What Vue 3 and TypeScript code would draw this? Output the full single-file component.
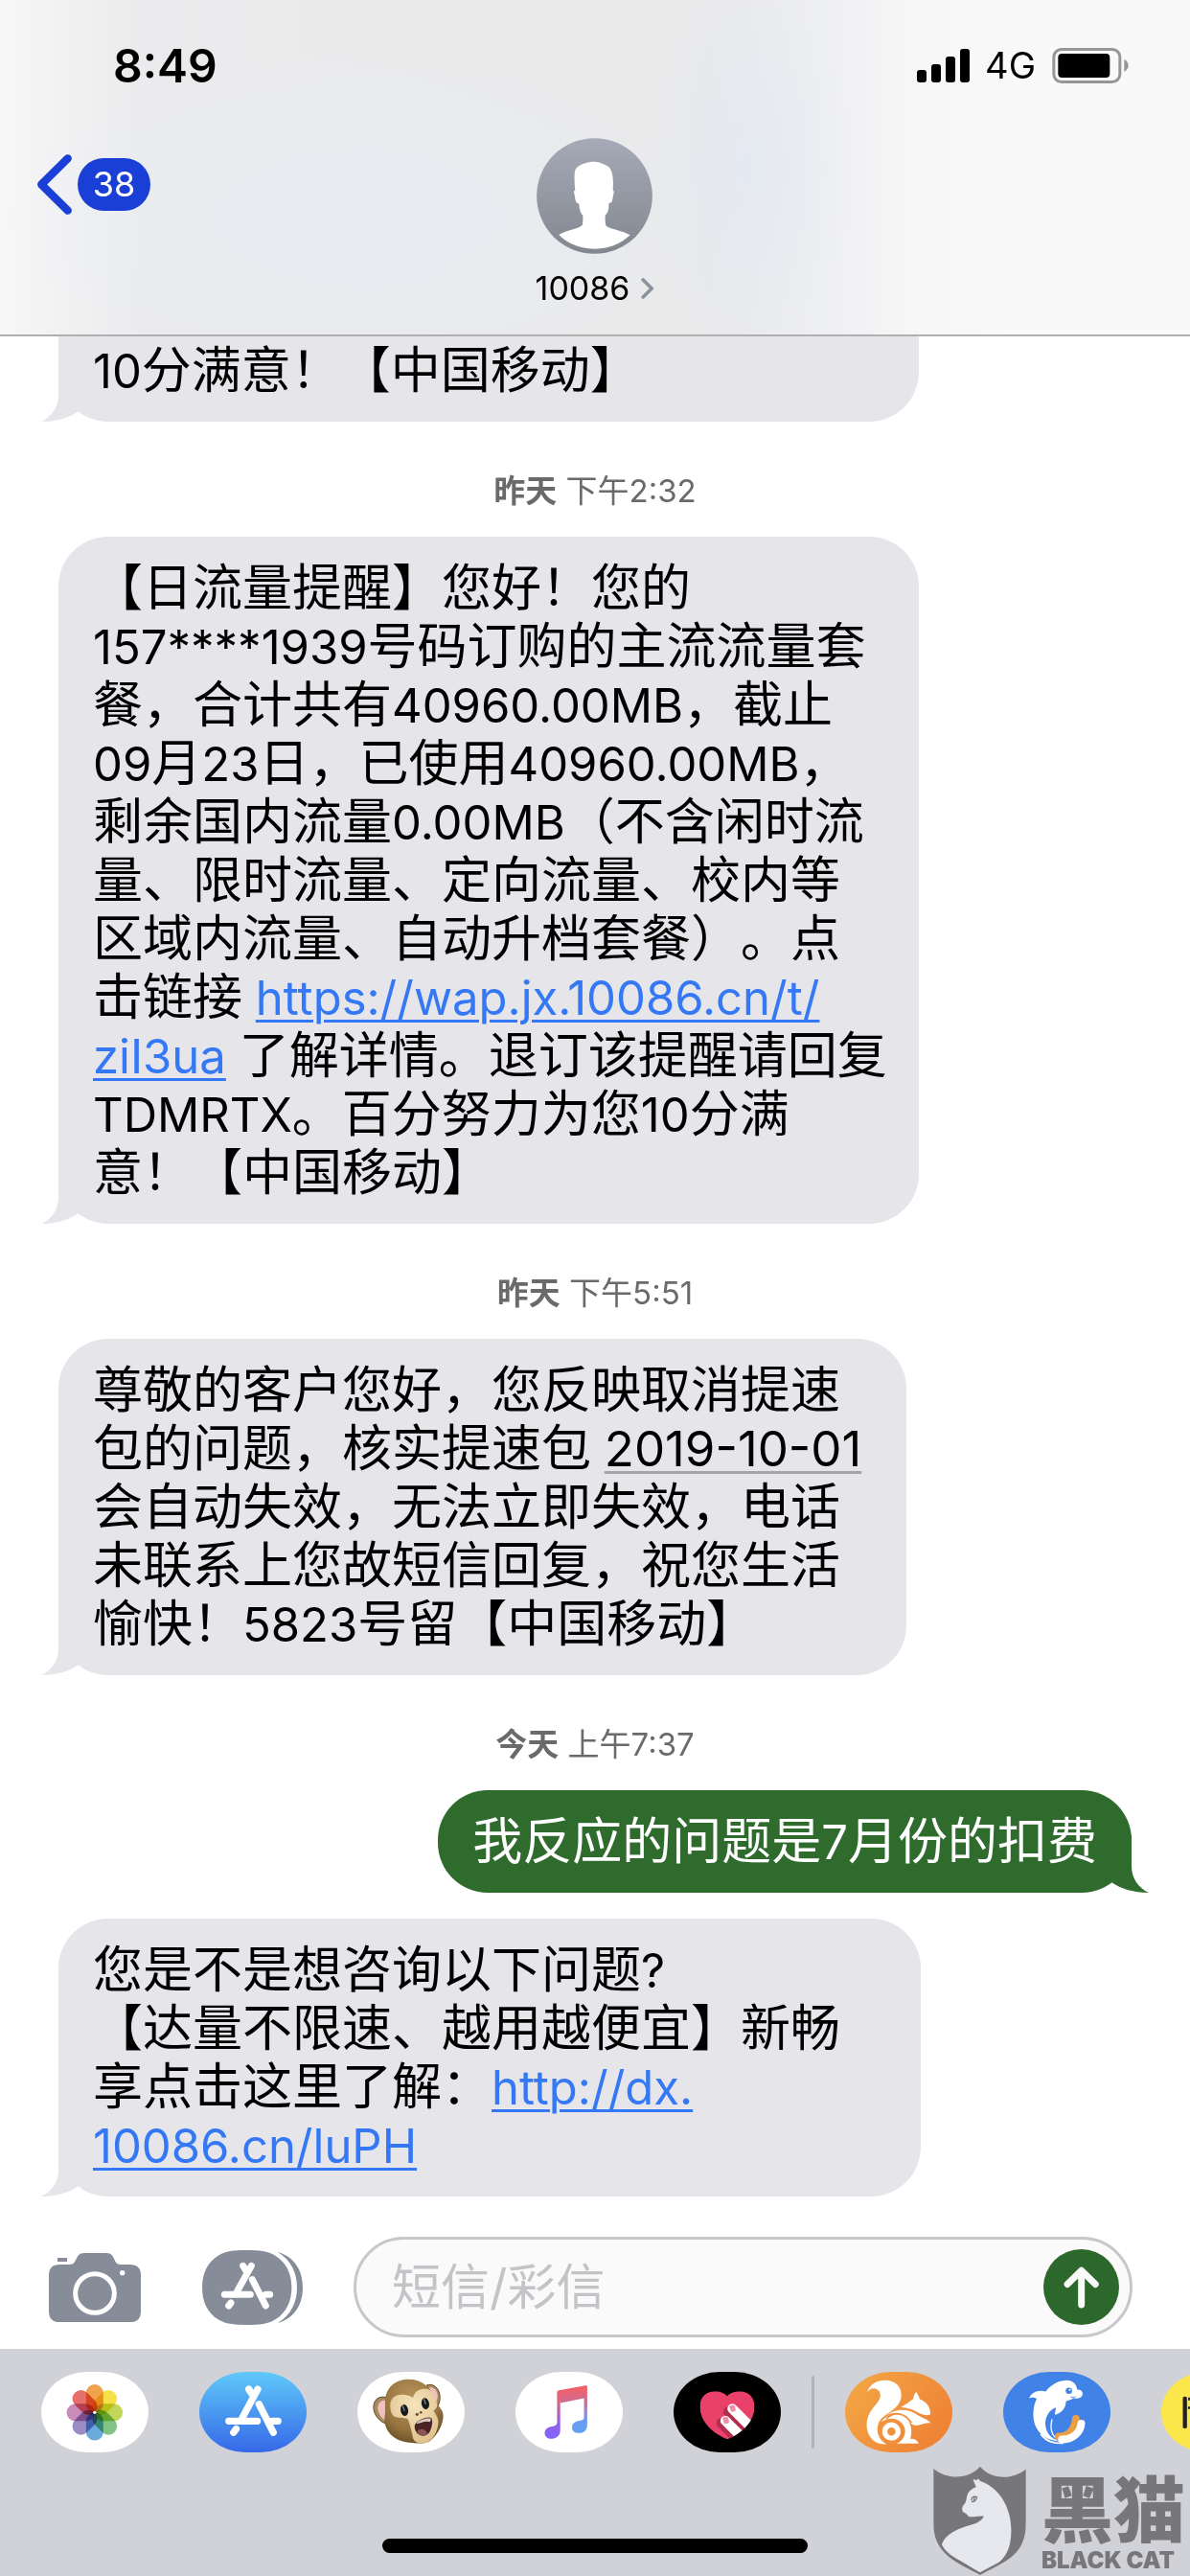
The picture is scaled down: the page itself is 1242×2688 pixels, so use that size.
<script setup lang="ts">
import { ref } from 'vue'

interface Segment {
  text: string
  kind?: 'link' | 'date'
}

interface Message {
  id: number
  sent?: boolean
  clipped?: boolean
  day?: string
  time?: string
  width?: number
  lines: Segment[][]
}

const draft = ref('')

// Latin runs are set slightly smaller than the Chinese text around them.
const runs = (text: string): string[] => text.match(/[\x20-\x7e]+|[^\x20-\x7e]+/g) ?? []
const isLatin = (text: string): boolean => /^[\x20-\x7e]/.test(text)

const messages: Message[] = [
  { id: 1, clipped: true, width: 80.2, lines: [[{ text: '10分满意！【中国移动】' }]] },
  {
    id: 2,
    day: '昨天',
    time: '下午2:32',
    width: 80.2,
    lines: [
      [{ text: '【日流量提醒】您好！您的' }],
      [{ text: '157****1939号码订购的主流流量套' }],
      [{ text: '餐，合计共有40960.00MB，截止' }],
      [{ text: '09月23日，已使用40960.00MB，' }],
      [{ text: '剩余国内流量0.00MB（不含闲时流' }],
      [{ text: '量、限时流量、定向流量、校内等' }],
      [{ text: '区域内流量、自动升档套餐）。点' }],
      [{ text: '击链接 ' }, { text: 'https://wap.jx.10086.cn/t/', kind: 'link' }],
      [{ text: 'ziI3ua', kind: 'link' }, { text: ' 了解详情。退订该提醒请回复' }],
      [{ text: 'TDMRTX。百分努力为您10分满' }],
      [{ text: '意！【中国移动】' }],
    ],
  },
  {
    id: 3,
    day: '昨天',
    time: '下午5:51',
    width: 79,
    lines: [
      [{ text: '尊敬的客户您好，您反映取消提速' }],
      [{ text: '包的问题，核实提速包 ' }, { text: '2019-10-01', kind: 'date' }],
      [{ text: '会自动失效，无法立即失效，电话' }],
      [{ text: '未联系上您故短信回复，祝您生活' }],
      [{ text: '愉快！5823号留【中国移动】' }],
    ],
  },
  { id: 4, sent: true, day: '今天', time: '上午7:37', lines: [[{ text: '我反应的问题是7月份的扣费' }]] },
  {
    id: 5,
    width: 80.4,
    lines: [
      [{ text: '您是不是想咨询以下问题?' }],
      [{ text: '【达量不限速、越用越便宜】新畅' }],
      [{ text: '享点击这里了解：' }, { text: 'http://dx.', kind: 'link' }],
      [{ text: '10086.cn/luPH', kind: 'link' }],
    ],
  },
]

const petals = ['#f0a24c', '#f6e146', '#c2d659', '#80c385', '#6aabdc', '#9b8cc5', '#c98cb9', '#e46f6b']
</script>

<template>
  <div class="phone">
    <header class="top">
      <div class="status">
        <span class="clock">8:49</span>
        <div class="indicators">
          <svg class="signal" viewBox="54 60 165 105" aria-hidden="true">
            <rect x="54" y="126" width="30" height="39" rx="9" />
            <rect x="99" y="108" width="30" height="57" rx="9" />
            <rect x="144" y="84" width="30" height="81" rx="9" />
            <rect x="189" y="60" width="30" height="105" rx="9" />
          </svg>
          <span class="network">4G</span>
          <svg class="battery" viewBox="474 57 238 111" aria-hidden="true">
            <rect x="478.500" y="61.500" width="207" height="102" rx="24" fill="none" stroke="#969696" stroke-width="9" />
            <rect x="492" y="75" width="162" height="75" rx="12" />
            <path d="M699 93Q712 100 712 112T699 132Z" fill="#969696" />
          </svg>
        </div>
      </div>
      <nav class="nav">
        <button class="back" type="button" aria-label="返回">
          <svg viewBox="115 392 110 190" aria-hidden="true">
            <path d="M213 405L130 487L213 569" fill="none" stroke="#193fd6" stroke-width="25" stroke-linecap="round" stroke-linejoin="round" />
          </svg>
          <span class="unread">38</span>
        </button>
        <button class="contact" type="button">
          <svg class="avatar" viewBox="120 42 363 363" aria-hidden="true">
            <defs>
              <linearGradient id="avatarFill" x1="0" y1="0" x2="0" y2="1">
                <stop offset="0" stop-color="#a6aab8" />
                <stop offset="1" stop-color="#82878f" />
              </linearGradient>
            </defs>
            <circle cx="301.500" cy="223.500" r="181" fill="url(#avatarFill)" />
            <path d="M190 345C215 330 253 326 263 315C266 305 265 295 265 284C258 278 254 266 253 248Q243 248 241 232L237 210Q237 206 241 206C238 180 237 148 243 138C252 124 282 116 301 116C318 116 336 126 346 132C360 146 361 176 359 206Q363 206 362 212L357 238Q355 246 346 246C347 264 344 278 335 284C335 296 334 308 338 317C350 328 390 331 413 346C383 374 345 389 302 389C259 389 219 374 190 345Z" fill="#fff" />
          </svg>
          <span class="name">
            10086
            <svg class="more" viewBox="440 484 42 68" aria-hidden="true">
              <path d="M446 490L474 518L446 546" fill="none" stroke="#8b929c" stroke-width="11" stroke-linecap="round" stroke-linejoin="round" />
            </svg>
          </span>
        </button>
      </nav>
    </header>

    <main class="thread">
      <template v-for="m in messages" :key="m.id">
        <p v-if="m.day" class="stamp"><b>{{ m.day }}</b> {{ m.time }}</p>
        <article
          class="bubble"
          :class="{ sent: m.sent, clipped: m.clipped, follow: !m.day && !m.clipped }"
          :style="m.width ? { width: m.width + '%' } : undefined"
        >
          <svg class="tail" viewBox="0 0 60 60" aria-hidden="true">
            <path d="M18 0V32C18 45 11 55 0 60C16 60 29 56 39 49L60 30V0Z" />
          </svg>
          <p v-for="(line, i) in m.lines" :key="i" class="line">
            <template v-for="(s, j) in line" :key="j">
              <a v-if="s.kind" href="#" :class="s.kind">{{ s.text }}</a>
              <template v-else>
                <span v-for="(r, k) in runs(s.text)" :key="k" :class="{ latin: isLatin(r) }">{{ r }}</span>
              </template>
            </template>
          </p>
        </article>
      </template>
    </main>

    <form class="composer" @submit.prevent>
      <button class="tool camera" type="button" aria-label="相机">
        <svg viewBox="153 147 288 216" aria-hidden="true">
          <path d="M180 162h30v12h-30zM187 183H218C245 183 232 147 264 147H333C364 147 352 183 378 183H407Q441 183 441 217V329Q441 363 407 363H187Q153 363 153 329V217Q153 183 187 183Z" fill="#868d99" />
          <circle cx="297" cy="273" r="61" fill="none" stroke="#fff" stroke-width="15" />
          <circle cx="383" cy="209" r="8" fill="#fff" />
        </svg>
      </button>
      <button class="tool store" type="button" aria-label="应用">
        <svg viewBox="633 138 315 234" aria-hidden="true">
          <path d="M773 138C812 138 838 140 862 155C897 177 913 212 913 255S897 333 862 355C838 370 812 372 773 372S708 370 683 355C648 333 633 298 633 255S648 177 683 155C708 140 734 138 773 138Z" fill="#868d99" />
          <path d="M870 144C925 160 948 205 948 255S925 350 870 366C912 340 930 300 930 255S912 170 870 144Z" fill="#868d99" />
          <g stroke="#fff" stroke-width="21" stroke-linecap="round" fill="none">
            <path d="M761 187L773 206M787 187L743 266M703 277H784M790 230L832 312M832 277H845M723 303L716 312" />
          </g>
        </svg>
      </button>
      <div class="field">
        <input v-model="draft" type="text" placeholder="短信/彩信" aria-label="短信/彩信" />
        <button class="send" type="submit" aria-label="发送">
          <svg viewBox="807 105 237 238" aria-hidden="true">
            <path d="M926 280V174M882 215L926 172L970 215" fill="none" stroke="#fafafa" stroke-width="21" stroke-linecap="round" stroke-linejoin="round" />
          </svg>
        </button>
      </div>
    </form>

    <footer class="dock">
      <div class="apps">
        <button class="app white" type="button" aria-label="照片">
          <svg viewBox="129 525 337 252" aria-hidden="true">
            <g class="flower">
              <rect v-for="(c, i) in petals" :key="c" x="270" y="564" width="54" height="88" rx="27" :fill="c" :transform="`rotate(${i * 45} 297 652)`" />
            </g>
            <circle cx="297" cy="652" r="5" fill="#fff" />
          </svg>
        </button>
        <button class="app blue" type="button" aria-label="App Store">
          <svg viewBox="623 525 338 252" aria-hidden="true">
            <path d="M779 579L793 600M807 579L759 668M716 679H806M811 626L856 715M851 679H871M739 704L731 715" fill="none" stroke="#fff" stroke-width="22" stroke-linecap="round" />
          </svg>
        </button>
        <button class="app white" type="button" aria-label="拟我表情">
          <svg viewBox="98 105 338 252" aria-hidden="true">
            <defs>
              <radialGradient id="fur" cx="0.45" cy="0.3" r="0.75">
                <stop offset="0" stop-color="#b8935a" />
                <stop offset="0.65" stop-color="#96743f" />
                <stop offset="1" stop-color="#644922" />
              </radialGradient>
              <radialGradient id="skin" cx="0.5" cy="0.3" r="0.8">
                <stop offset="0" stop-color="#f6e4bd" />
                <stop offset="1" stop-color="#dcbd86" />
              </radialGradient>
            </defs>
            <path d="M187 184C158 178 145 202 150 225C155 247 172 261 186 267Z" fill="#a98a5e" stroke="#5f4726" stroke-width="3" />
            <path d="M186 194C166 192 159 211 164 228C168 243 177 252 185 257Z" fill="#f1bfc2" />
            <path d="M315 147C338 137 358 158 358 184C358 198 354 209 350 214Z" fill="#a98a5e" stroke="#5f4726" stroke-width="3" />
            <path d="M324 154C341 149 352 168 351 184L347 198Z" fill="#f1bfc2" />
            <path d="M186 211C181 165 207 131 254 128C300 126 327 151 339 187C348 209 372 224 368 248C366 273 350 304 326 322C309 333 276 328 250 325C207 318 181 286 184 248C185 234 188 224 186 211Z" fill="url(#fur)" />
            <path d="M204 229C196 199 206 179 233 176C253 175 267 181 273 186C278 168 290 157 313 157C333 159 343 179 349 206C351 217 344 222 338 226C342 236 354 249 353 264C351 294 334 322 312 328C293 332 278 327 273 313C269 292 264 269 257 253C240 244 211 259 204 229Z" fill="url(#skin)" />
            <ellipse cx="246" cy="225" rx="12" ry="18" transform="rotate(-10 246 225)" fill="#151b1d" />
            <ellipse cx="312" cy="204" rx="12" ry="18" transform="rotate(-10 312 204)" fill="#151b1d" />
            <path d="M241 212L246 226M308 191L313 205" stroke="#7d8789" stroke-width="4" stroke-linecap="round" />
            <circle cx="286" cy="238" r="5" fill="#6b4d35" />
            <circle cx="298" cy="232" r="4" fill="#6b4d35" />
            <path d="M278 276C279 258 322 242 331 250C338 261 331 292 320 300C305 312 280 304 278 276Z" fill="#4c2427" />
            <path d="M286 292C296 279 314 285 319 300C308 309 292 306 286 292Z" fill="#8e5558" />
            <path d="M283 268C289 257 319 247 330 252L327 262C312 256 295 267 283 268Z" fill="#d8cfc0" />
          </svg>
        </button>
        <button class="app white" type="button" aria-label="音乐">
          <svg viewBox="593 105 338 252" aria-hidden="true">
            <defs>
              <linearGradient id="note" gradientUnits="userSpaceOnUse" x1="755" y1="160" x2="765" y2="310">
                <stop offset="0" stop-color="#ef6169" />
                <stop offset="0.25" stop-color="#cf6a92" />
                <stop offset="0.65" stop-color="#6f9af0" />
                <stop offset="1" stop-color="#5aa5f8" />
              </linearGradient>
              <linearGradient id="noteLeft" gradientUnits="userSpaceOnUse" x1="730" y1="160" x2="720" y2="310">
                <stop offset="0" stop-color="#ef6169" />
                <stop offset="0.25" stop-color="#dd6484" />
                <stop offset="0.7" stop-color="#9461e8" />
                <stop offset="1" stop-color="#8262fb" />
              </linearGradient>
            </defs>
            <path d="M724 168Q724 163 730 162L813 147Q819 146 819 152V270C819 288 808 297 793 297C779 297 771 290 771 280C771 266 781 260 795 258C805 257 809 254 809 246V187L734 202V200Z" fill="url(#note)" />
            <path d="M724 168L734 164V288C734 305 722 315 706 315C693 315 685 307 685 298C685 285 694 278 708 276C720 274 724 272 724 262Z" fill="url(#noteLeft)" />
          </svg>
        </button>
        <button class="app black" type="button" aria-label="Digital Touch">
          <svg viewBox="1088 105 338 252" aria-hidden="true">
            <defs>
              <clipPath id="heartClip">
                <path d="M1257 181C1276 157 1343 155 1343 215C1343 262 1298 301 1257 316C1216 301 1171 262 1171 215C1171 155 1238 157 1257 181Z" />
              </clipPath>
            </defs>
            <g clip-path="url(#heartClip)">
              <path d="M1160 150h200v180h-200z" fill="#e94169" />
              <path d="M1262 230L1320 290M1240 265L1290 315" stroke="#b32d4d" stroke-width="34" stroke-linecap="round" />
              <path d="M1273 220L1340 287M1251 258L1310 317" stroke="#fff" stroke-width="31" stroke-linecap="round" />
              <path d="M1263 213Q1272 206 1281 211L1284 226Q1276 233 1269 228ZM1242 250Q1251 243 1260 248L1263 263Q1255 271 1247 265Z" fill="#f08ba8" />
            </g>
          </svg>
        </button>
        <span class="divider"></span>
        <button class="app orange" type="button" aria-label="UC">
          <svg viewBox="188 495 338 252" aria-hidden="true">
            <path d="M257 559C265 534 287 521 315 521C346 521 366 541 365 569C364 591 349 609 326 623C304 637 290 650 290 675C290 697 301 713 319 722C281 725 256 698 256 661C256 627 278 606 291 589C305 570 300 551 283 547C273 545 263 550 257 559Z" fill="#fff" />
            <path d="M364 606C382 595 395 586 403 579C403 570 408 563 412 557C416 565 422 572 423 580C444 588 457 604 457 627C450 634 431 630 414 620C399 612 383 607 364 606Z" fill="#fff" />
            <path d="M318 633C347 607 391 611 413 628C430 640 446 642 459 656C438 650 425 667 404 662C386 652 374 628 344 624C333 624 325 628 318 633Z" fill="#fff" />
            <path d="M303 652C318 628 349 621 373 636C396 650 402 680 393 705Q412 703 420 720H350C371 711 380 692 376 673C370 644 331 630 303 652Z" fill="#fff" />
            <circle cx="334" cy="682" r="21" fill="none" stroke="#fff" stroke-width="16" />
            <path d="M318 641C348 614 377 626 397 654" fill="none" stroke="#ef8c38" stroke-width="5" />
          </svg>
        </button>
        <button class="app sky" type="button" aria-label="携程">
          <svg viewBox="683 495 338 252" aria-hidden="true">
            <path d="M765 577C773 558 794 550 817 556C836 532 861 521 884 521C903 522 914 533 916 550C928 549 935 556 933 566C931 576 918 580 906 577C898 582 888 583 881 587C880 608 868 624 846 629C845 621 850 612 849 607C828 614 815 637 816 660C818 690 839 710 868 713C812 714 777 676 778 628C778 606 783 590 789 579C780 573 772 574 765 577Z" fill="#fff" />
            <path d="M837 643C827 682 842 710 872 710C900 706 922 682 929 656" fill="none" stroke="#fff" stroke-width="4" />
            <path d="M858 698C889 702 910 672 912 642" fill="none" stroke="#ee9f43" stroke-width="24" stroke-linecap="round" />
            <path d="M929 657C927 684 901 709 868 707" fill="none" stroke="#fff" stroke-width="24" stroke-linecap="round" />
            <path d="M801 690C821 715 841 720 872 719" fill="none" stroke="#fff" stroke-width="5" />
            <circle cx="890" cy="554" r="10" fill="#4082e6" />
            <circle cx="893" cy="551" r="3" fill="#fff" />
            <path d="M896 573Q904 579 911 572" fill="none" stroke="#4082e6" stroke-width="3" />
          </svg>
        </button>
        <button class="app yellow" type="button" aria-label="更多">
          <svg viewBox="1178 495 338 252" aria-hidden="true">
            <rect x="1246" y="572" width="13" height="100" rx="5" fill="#222" />
            <path d="M1263 575h40v9h-40zM1262 604h40v7h-40z" fill="#222" />
          </svg>
        </button>
      </div>
      <div class="home"></div>
      <div class="watermark">
        <svg class="shield" viewBox="459 788 292 346" aria-hidden="true">
          <path d="M460 797C503 833 572 832 606 790C640 832 708 833 750 799V970C750 1075 675 1092 606 1131C537 1092 460 1068 460 970Z" fill="#77777a" />
          <path d="M584 829L595 834L600 828L606 835C664 855 705 916 704 992C704 1047 685 1077 665 1091L606 1123L545 1087C515 1072 493 1053 486 1035C500 996 551 981 589 970C606 964 615 954 618 946C602 944 587 950 572 948C565 942 562 936 553 933C547 924 550 914 559 906C566 893 562 881 573 868C582 858 591 857 594 854Q588 843 584 829Z" fill="#e7e8ed" />
          <path d="M579 896C579 884 589 883 596 886C594 896 588 903 579 900M588 886L587 897" fill="none" stroke="#77777a" stroke-width="4" />
        </svg>
        <div class="brand">
          <span class="brand-cn">黑猫</span>
          <span class="brand-en">BLACK CAT</span>
        </div>
      </div>
    </footer>
  </div>
</template>

<style>
body {
  margin: 0;
  background: #fff;
}
</style>

<style scoped>
.phone {
  display: flex;
  flex-direction: column;
  min-height: 100vh;
  overflow: hidden;
  background: #fff;
  color: #000;
  font-family: Inter, "Noto Sans CJK SC", sans-serif;
  text-spacing-trim: space-all;
}

svg {
  display: block;
}

p {
  margin: 0;
}

button {
  margin: 0;
  padding: 0;
  border: 0;
  background: none;
  color: inherit;
  font: inherit;
}

.top {
  border-bottom: 2px solid #b0b0b2;
  background:
    radial-gradient(ellipse 9% 60% at 63% 50%, rgba(226, 232, 243, 0.7), transparent),
    radial-gradient(ellipse 30% 50% at 30% 65%, rgba(232, 237, 243, 0.9), transparent),
    linear-gradient(90deg, #f7f7f7 0%, #f3f3f4 4%, #ebebed 12%, #e9e9ea 60%, #eeeff1 69%, #f6f6f7 76%, #f9f9f9 84%);
}

.status {
  display: flex;
  align-items: center;
  justify-content: space-between;
  height: 136px;
  padding: 0 64px 0 118px;
}

.clock {
  font-size: 48px;
  font-weight: 600;
}

.indicators {
  display: flex;
  align-items: center;
}

.signal {
  width: 55px;
  height: 35px;
}

.network {
  margin: 0 17px 0 16px;
  font-size: 38px;
}

.battery {
  width: 80px;
  height: 37px;
}

.nav {
  display: grid;
  grid-template-columns: 1fr auto 1fr;
  align-items: start;
  padding: 8px 38px 25px;
}

.back {
  display: flex;
  align-items: center;
  justify-self: start;
  gap: 6px;
  margin-top: 17px;
}

.back svg {
  width: 37px;
  height: 63px;
}

.unread {
  min-width: 76px;
  border-radius: 28px;
  background: #193fd6;
  color: #fff;
  font-size: 36px;
  line-height: 55px;
  text-align: center;
}

.contact {
  display: flex;
  flex-direction: column;
  align-items: center;
}

.avatar {
  width: 121px;
  height: 121px;
}

.name {
  display: flex;
  align-items: center;
  gap: 12px;
  margin-top: 13px;
  font-size: 34px;
  line-height: 46px;
}

.more {
  width: 14px;
  height: 22px;
}

.thread {
  display: flex;
  flex: 1;
  flex-direction: column;
  align-items: flex-start;
  padding: 0 61px;
}

.stamp {
  align-self: center;
  padding: 52px 0 28px;
  color: #6a6a6d;
  font-size: 33px;
  line-height: 40px;
}

.stamp b {
  font-weight: 600;
}

.bubble {
  position: relative;
  box-sizing: border-box;
  padding: 23px 36px;
  border-radius: 52px;
  background: #e5e5ea;
  font-size: 52px;
  line-height: 61px;
}

.line {
  height: 61px;
  white-space: pre;
}

.latin,
.link {
  font-size: 49px;
}

.clipped {
  padding-top: 5px;
  border-top-left-radius: 0;
  border-top-right-radius: 0;
}

.follow {
  margin-top: 27px;
}

.sent {
  align-self: flex-end;
  background: #2e6b2c;
  color: #fff;
}

.tail {
  position: absolute;
  bottom: 0;
  left: -18px;
  width: 60px;
  height: 60px;
  fill: #e5e5ea;
}

.sent .tail {
  right: -18px;
  left: auto;
  fill: #2e6b2c;
  transform: scaleX(-1);
}

.line span,
.line a {
  position: relative;
}

.link {
  color: #3478f6;
  text-decoration: underline;
  text-decoration-thickness: 3px;
  text-underline-offset: 5px;
}

.date {
  color: inherit;
  font-size: 51px;
  text-decoration: underline #a5a5a9 3px;
  text-underline-offset: 5px;
}

.composer {
  display: flex;
  align-items: center;
  padding: 42px 60px 12px 51px;
}

.camera svg {
  width: 96px;
  height: 72px;
}

.store {
  margin: 0 53px 0 64px;
}

.store svg {
  width: 105px;
  height: 78px;
}

.field {
  display: flex;
  flex: 1;
  align-items: center;
  min-width: 0;
  box-sizing: border-box;
  height: 105px;
  padding: 0 11px 0 37px;
  border: 3px solid #c6c6cb;
  border-radius: 53px;
  background: #fafafa;
}

.field input {
  flex: 1;
  min-width: 0;
  padding: 0;
  border: 0;
  outline: 0;
  background: none;
  font-family: inherit;
  font-size: 51px;
}

.field input::placeholder {
  color: #c4c4c8;
  opacity: 1;
}

.send {
  border-radius: 50%;
  background: #2c672c;
}

.send svg {
  width: 79px;
  height: 79px;
}

.dock {
  position: relative;
  display: flex;
  flex-direction: column;
  align-items: center;
  justify-content: space-between;
  box-sizing: border-box;
  min-height: 237px;
  padding: 24px 0;
  overflow: hidden;
  background: #d1d2d8;
}

.apps {
  display: flex;
  align-items: center;
  align-self: stretch;
  gap: 53px;
  padding-left: 43px;
}

.app {
  flex: none;
  overflow: hidden;
  border-radius: 48px / 42px;
}

.app svg {
  width: 112px;
  height: 84px;
}

.flower rect {
  mix-blend-mode: multiply;
}

.white {
  background: #fff;
}

.blue {
  background: linear-gradient(#5fc9f8, #3568e8);
}

.black {
  background: #000;
}

.orange {
  background: linear-gradient(125deg, #f3a946, #ee7c33);
}

.sky {
  background: #4082e6;
}

.yellow {
  background: #fbe74a;
}

.divider {
  flex: none;
  width: 3px;
  height: 76px;
  margin: 0 -21px;
  border-radius: 2px;
  background: #b3b4b9;
}

.home {
  width: 444px;
  height: 15px;
  border-radius: 8px;
  background: #000;
}

.watermark {
  position: absolute;
  right: 0;
  bottom: 0;
  display: flex;
  align-items: flex-start;
  gap: 16px;
  color: #77777a;
}

.shield {
  width: 97px;
  height: 115px;
}

.brand {
  display: flex;
  flex-direction: column;
  width: 155px;
  white-space: nowrap;
}

.brand-cn {
  font-family: "Noto Sans CJK SC", sans-serif;
  font-size: 75px;
  font-weight: 900;
  line-height: 84px;
}

.brand-en {
  font-size: 24px;
  font-weight: 900;
  line-height: 30px;
}
</style>
